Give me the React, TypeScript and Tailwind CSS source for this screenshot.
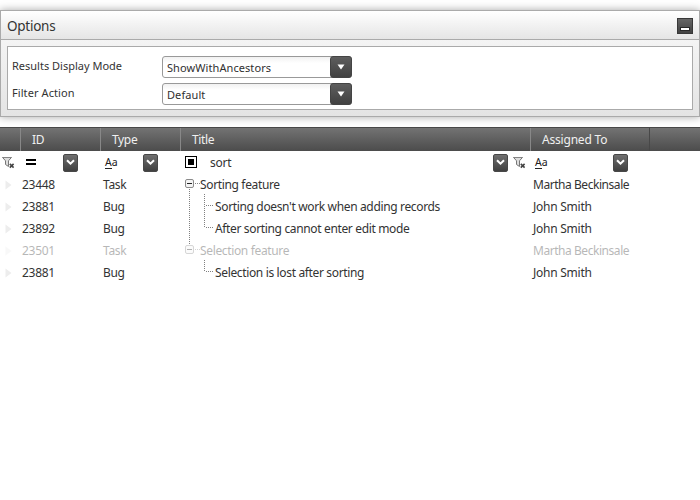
import React from 'react';

const BUTTON = 'bg-linear-to-b from-[#707070] to-[#404040] border border-[#484848]';

function Combo({ value }: { value: string }) {
  return (
    <div className="relative flex h-[22px] w-[190px] rounded-[3px] border border-[#999] bg-linear-to-b from-[#f1f1f1] from-0% to-white to-30%">
      <span className="pl-1 pt-[3px] text-[11px] leading-4 tracking-[0.08px] text-[#303030]">{value}</span>
      <div className="absolute -right-px -top-px flex h-[22px] w-[22px] items-center justify-center rounded-[3px] border border-[#444] bg-linear-to-b from-[#5e5e5e] to-[#414141]">
        <svg width="8" height="6" viewBox="0 0 8 6"><path d="M0.5 0.5h7L4 5.5z" fill="#fff" /></svg>
      </div>
    </div>
  );
}

function DropButton() {
  return (
    <div className={`flex h-[18px] w-[15px] shrink-0 items-center justify-center rounded-[2px] ${BUTTON}`}>
      <svg width="9" height="7" viewBox="0 0 9 7"><path d="M1 1.2L4.5 4.7L8 1.2" fill="none" stroke="#fff" strokeWidth="2" /></svg>
    </div>
  );
}

function ClearFilter() {
  return (
    <svg width="13" height="13" viewBox="0 0 13 13" fill="none">
      <path d="M0.6 1.5H9.4L6.5 4.8V10.5L3.5 8.5V4.8Z" stroke="#777" fill="#ddd" />
      <path d="M0.5 1.5h9" stroke="#858585" />
      <path d="M7.8 7.9l3.8 3.7M11.6 7.9l-3.8 3.7" stroke="#444" strokeWidth="1.6" />
    </svg>
  );
}

function TextOperator() {
  return (
    <div className="flex h-[12px] w-4 flex-col">
      <span className="h-[11px] text-[10.5px] leading-[10px] text-[#222]">Aa</span>
      <div className="h-px w-[7px] bg-[#222]" />
    </div>
  );
}

function Expander() {
  return (
    <svg width="15" height="9" viewBox="0 0 15 9" fill="none">
      <rect x="0.5" y="0.5" width="8" height="8" rx="1.5" fill="#f4f4f4" stroke="#8b8b8b" />
      <path d="M2 4.5h5" stroke="#222" />
      <path d="M10 4.5h5" stroke="#888" strokeDasharray="1 1" />
    </svg>
  );
}

interface Item {
  id: string; type: string; title: string; owner: string;
  child?: boolean; dim?: boolean;
}

const ITEMS: Item[] = [
  { id: '23448', type: 'Task', title: 'Sorting feature', owner: 'Martha Beckinsale' },
  { id: '23881', type: 'Bug', title: "Sorting doesn't work when adding records", owner: 'John Smith', child: true },
  { id: '23892', type: 'Bug', title: 'After sorting cannot enter edit mode', owner: 'John Smith', child: true },
  { id: '23501', type: 'Task', title: 'Selection feature', owner: 'Martha Beckinsale', dim: true },
  { id: '23881', type: 'Bug', title: 'Selection is lost after sorting', owner: 'John Smith', child: true },
];

const COLUMNS = 'grid grid-cols-[20px_80px_80px_350px_120px_50px]';

function Row({ item }: { item: Item }) {
  const ownerTracking = item.owner.startsWith('Martha') ? 'tracking-[-0.45px]' : 'tracking-[-0.25px]';
  return (
    <div className={`${COLUMNS} h-[22px] items-start text-[12px] leading-[22px] tracking-[-0.3px] text-[#333] ${item.dim ? 'opacity-35' : ''}`}>
      <svg className="ml-[5px] mt-[6px]" width="7" height="10" viewBox="0 0 7 10"><path d="M0.5 0.5L6.5 5L0.5 9.5z" fill="#ededed" /></svg>
      <span className="pl-0.5">{item.id}</span>
      <span className="pl-[3px]">{item.type}</span>
      <div className={`flex items-start whitespace-nowrap ${item.child ? 'pl-[35px]' : 'pl-[5px]'}`}>
        {!item.child && <span className="mt-[5px] flex"><Expander /></span>}
        <span className="tracking-[-0.35px]">{item.title}</span>
      </div>
      <span className={`whitespace-nowrap pl-[3px] ${ownerTracking}`}>{item.owner}</span>
      <span />
    </div>
  );
}

export default function App() {
  return (
    <div className="h-[500px] w-[700px] overflow-hidden bg-white pt-[10px] font-['Noto_Sans',sans-serif] text-[#333]">
      <section className="h-[107px] border border-[#aaa] bg-linear-to-b from-[#fafafa] to-[#e4e4e4] shadow-[0_0_8px_rgba(0,0,0,0.35)]">
        <header className="flex h-[29px] items-center justify-between border-b border-[#aaa] bg-linear-to-b from-white to-[#e5e5e5] pl-1.5 pr-1.5">
          <h1 className="mt-[2px] text-[13.5px] leading-[18px] tracking-[-0.25px]">Options</h1>
          <div className="mt-[1px] flex h-4 w-4 items-end justify-center border border-[#383838] bg-linear-to-b from-[#666] to-[#424242] pb-[2px]">
            <div className="h-1 w-[10px] border border-[#282828] bg-white" />
          </div>
        </header>
        <div className="mx-1.5 mt-1.5 flex h-16 flex-col gap-[5px] border border-[#aaa] bg-white pl-1 pt-[9px]">
          <div className="flex">
            <label className="w-[150px] pt-[2px] text-[11px] leading-4">Results Display Mode</label>
            <Combo value="ShowWithAncestors" />
          </div>
          <div className="flex">
            <label className="w-[150px] pt-[2px] text-[11px] leading-4 tracking-[0.08px]">Filter Action</label>
            <Combo value="Default" />
          </div>
        </div>
      </section>

      <main className="relative mt-[10px]">
        <div className={`${COLUMNS} h-6 grid-rows-[23px] border-t border-[#484848] bg-linear-to-b from-[#737373] to-[#4c4c4c] text-[12px] leading-[24px] tracking-[-0.35px] text-[#f0f0f0]`}>
          <span />
          <span className="border-l border-[#888] pl-[11px]">ID</span>
          <span className="border-l border-[#888] pl-[11px]">Type</span>
          <span className="border-l border-[#888] pl-[11px]">Title</span>
          <span className="border-l border-[#888] pl-[11px] tracking-[-0.2px]">Assigned To</span>
          <span className="-ml-px border-l border-[#484848]" />
        </div>

        <div className="grid h-[23px] grid-cols-[20px_80px_80px_332px_138px_50px] items-center">
          <div className="pl-[2px]"><ClearFilter /></div>
          <div className="flex items-center justify-between pl-[6px] pr-[22px]">
            <svg className="-mt-px" width="10" height="6" viewBox="0 0 10 6"><path d="M0 1h10M0 5h10" stroke="#000" strokeWidth="2" /></svg>
            <DropButton />
          </div>
          <div className="flex items-center justify-between pl-[5px] pr-[22px]"><TextOperator /><DropButton /></div>
          <div className="flex items-center pl-[5px] pr-[4px]">
            <div className="-mt-px flex h-3 w-3 shrink-0 items-center justify-center border border-black"><div className="h-1.5 w-1.5 bg-black" /></div>
            <span className="grow pl-[13px] text-[12px] leading-[22px] tracking-[-0.25px]">sort</span>
            <DropButton />
          </div>
          <div className="flex items-center pl-[1px] pr-[22px]">
            <ClearFilter />
            <span className="grow pl-[9px]"><TextOperator /></span>
            <DropButton />
          </div>
        </div>

        {ITEMS.map((item, i) => <Row key={i} item={item} />)}

        <svg className="absolute left-[180px] top-[47px]" width="35" height="110" viewBox="0 0 35 110" fill="none" stroke="#808080" strokeDasharray="1 1">
          <path d="M9.5 15v56" />
          <path d="M24.5 20v34M26 31.5h8M26 53.5h8" />
          <path d="M24.5 86v12M26 97.5h8" />
        </svg>
      </main>
    </div>
  );
}
